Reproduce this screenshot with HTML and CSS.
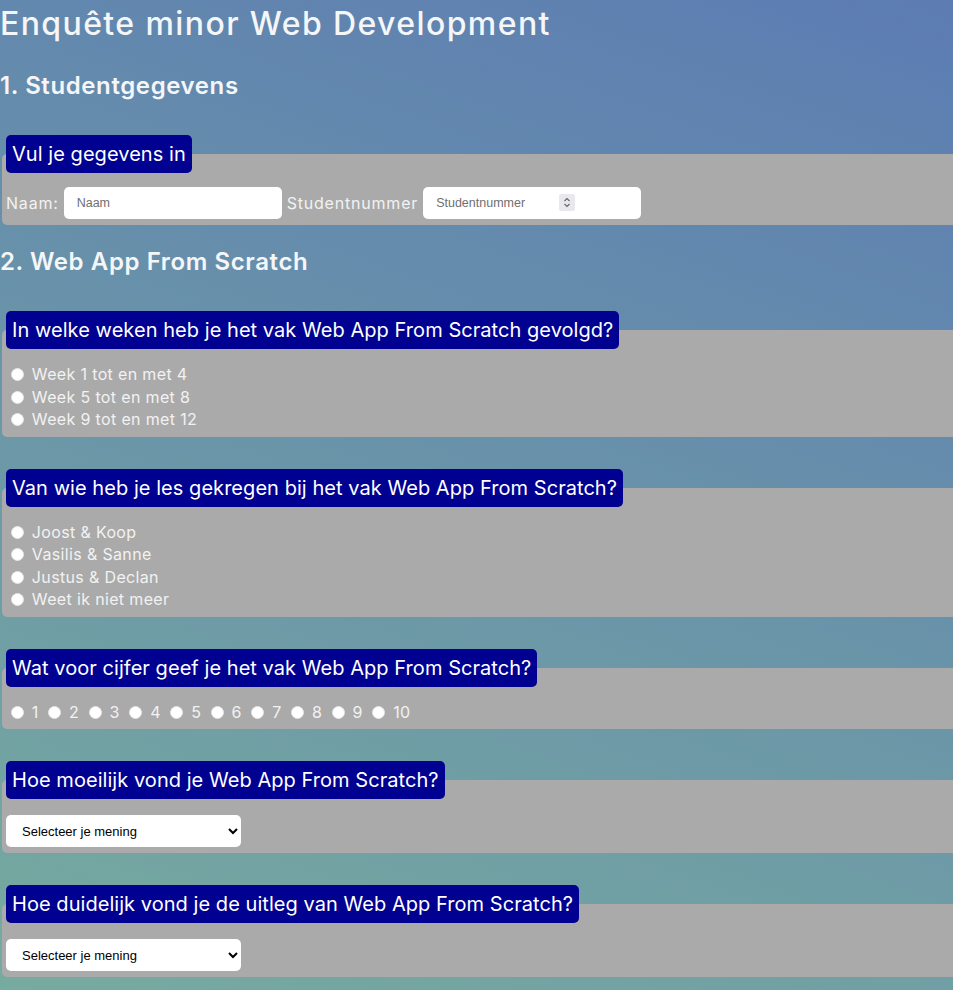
FILE: index.html
```html
<!DOCTYPE html>
<html lang="nl">
<head>
<meta charset="utf-8">
<title>Enquête minor Web Development</title>
<link rel="stylesheet" href="styles.css">
</head>
<body>
<h1 class="title">Enquête minor Web Development</h1>

<section class="part">
  <h2 class="part-title">1. Studentgegevens</h2>
  <fieldset class="question">
    <legend class="question-title">Vul je gegevens in</legend>
    <div class="fields">
      <label class="field-label" for="naam">Naam:</label>
      <input class="text-input" id="naam" type="text" placeholder="Naam">
      <label class="field-label" for="nummer">Studentnummer</label>
      <span class="number-wrap">
        <input class="text-input number-input" id="nummer" type="number" placeholder="Studentnummer">
        <span class="spinner" aria-hidden="true">
          <svg width="16" height="17" viewBox="0 0 16 17"><polyline points="5.5,7 8,4.5 10.5,7" fill="none" stroke="#666" stroke-width="1.1"/><polyline points="5.5,10 8,12.5 10.5,10" fill="none" stroke="#666" stroke-width="1.1"/></svg>
        </span>
      </span>
    </div>
  </fieldset>
</section>

<section class="part">
  <h2 class="part-title">2. Web App From Scratch</h2>

  <fieldset class="question">
    <legend class="question-title">In welke weken heb je het vak Web App From Scratch gevolgd?</legend>
    <div class="options">
      <label class="option"><input class="radio" type="radio" name="weken"> Week 1 tot en met 4</label>
      <label class="option"><input class="radio" type="radio" name="weken"> Week 5 tot en met 8</label>
      <label class="option"><input class="radio" type="radio" name="weken"> Week 9 tot en met 12</label>
    </div>
  </fieldset>

  <fieldset class="question">
    <legend class="question-title">Van wie heb je les gekregen bij het vak Web App From Scratch?</legend>
    <div class="options">
      <label class="option"><input class="radio" type="radio" name="docent"> Joost &amp; Koop</label>
      <label class="option"><input class="radio" type="radio" name="docent"> Vasilis &amp; Sanne</label>
      <label class="option"><input class="radio" type="radio" name="docent"> Justus &amp; Declan</label>
      <label class="option"><input class="radio" type="radio" name="docent"> Weet ik niet meer</label>
    </div>
  </fieldset>

  <fieldset class="question">
    <legend class="question-title">Wat voor cijfer geef je het vak Web App From Scratch?</legend>
    <div class="grades">
      <label class="grade"><input class="radio" type="radio" name="cijfer"> 1</label>
      <label class="grade"><input class="radio" type="radio" name="cijfer"> 2</label>
      <label class="grade"><input class="radio" type="radio" name="cijfer"> 3</label>
      <label class="grade"><input class="radio" type="radio" name="cijfer"> 4</label>
      <label class="grade"><input class="radio" type="radio" name="cijfer"> 5</label>
      <label class="grade"><input class="radio" type="radio" name="cijfer"> 6</label>
      <label class="grade"><input class="radio" type="radio" name="cijfer"> 7</label>
      <label class="grade"><input class="radio" type="radio" name="cijfer"> 8</label>
      <label class="grade"><input class="radio" type="radio" name="cijfer"> 9</label>
      <label class="grade"><input class="radio" type="radio" name="cijfer"> 10</label>
    </div>
  </fieldset>

  <fieldset class="question">
    <legend class="question-title">Hoe moeilijk vond je Web App From Scratch?</legend>
    <select class="select">
      <option>Selecteer je mening</option>
      <option>Heel makkelijk</option>
      <option>Makkelijk</option>
      <option>Neutraal</option>
      <option>Moeilijk</option>
      <option>Heel moeilijk</option>
    </select>
  </fieldset>

  <fieldset class="question">
    <legend class="question-title">Hoe duidelijk vond je de uitleg van Web App From Scratch?</legend>
    <select class="select">
      <option>Selecteer je mening</option>
      <option>Heel duidelijk</option>
      <option>Duidelijk</option>
      <option>Neutraal</option>
      <option>Onduidelijk</option>
      <option>Heel onduidelijk</option>
    </select>
  </fieldset>
</section>
</body>
</html>
```

FILE: styles.css
```css
html {
  min-height: 100%;
  background: linear-gradient(200deg, #5c7cb3, #77ab9f);
}

body {
  margin: 0;
  font-family: Inter, "Open Sans", sans-serif;
  color: #f2f2f2;
}

.title {
  margin: 0;
  font-size: 32px;
  font-weight: 500;
  line-height: 48px;
  letter-spacing: 1.4px;
  color: #f4f6f8;
}

.part-title {
  margin: 20px 0 0;
  font-size: 24px;
  font-weight: 600;
  line-height: 36px;
  letter-spacing: 0.6px;
  color: #f4f6f8;
}

.part + .part .part-title {
  margin-top: 19px;
}

.question {
  margin: 31px 0 0 2px;
  padding: 14px 4px 6px;
  border: none;
  border-radius: 5px 0 0 5px;
  background: #aaaaaa;
  min-width: 0;
}

.question + .question {
  margin-top: 32px;
}

.question-title {
  padding: 4px 6px;
  border-radius: 5px;
  background: #000091;
  color: #ffffff;
  font-size: 20px;
  font-weight: 400;
  line-height: 30px;
  letter-spacing: 0.05px;
}

.fields {
  display: flex;
  align-items: center;
  gap: 5px;
  font-size: 16px;
}

.field-label {
  color: #f2f2f2;
  letter-spacing: 0.8px;
}

.text-input {
  box-sizing: border-box;
  width: 218px;
  height: 32px;
  padding: 0 13px;
  border: none;
  border-radius: 5px;
  background: #ffffff;
  font-family: "Liberation Sans", Arial, sans-serif;
  font-size: 12.5px;
  color: #222;
}

.text-input::placeholder {
  color: #6f6f6f;
}

.number-wrap {
  position: relative;
  display: inline-flex;
}

.number-input {
  padding-right: 66px;
  appearance: textfield;
  -moz-appearance: textfield;
}

.number-input::-webkit-inner-spin-button,
.number-input::-webkit-outer-spin-button {
  -webkit-appearance: none;
  margin: 0;
}

.spinner {
  position: absolute;
  left: 136px;
  top: 7px;
  width: 16px;
  height: 17px;
  border-radius: 2px;
  background: #e9e9ed;
  pointer-events: none;
}

.spinner svg {
  display: block;
}

.options {
  display: flex;
  flex-direction: column;
}

.option,
.grade {
  font-size: 16px;
  line-height: 22.5px;
  letter-spacing: 0.35px;
}

.radio {
  appearance: none;
  -webkit-appearance: none;
  box-sizing: border-box;
  width: 13px;
  height: 13px;
  margin: 3px 3px 0 5px;
  border: 1px solid #e6e6e6;
  border-radius: 50%;
  background: #ffffff;
  vertical-align: -1px;
}

.select {
  box-sizing: border-box;
  width: 235px;
  height: 32px;
  margin-top: 2px;
  padding: 0 12px;
  border: none;
  border-radius: 5px;
  background: #ffffff;
  color: #000000;
  font-family: "Liberation Sans", Arial, sans-serif;
  font-size: 13px;
}
```
